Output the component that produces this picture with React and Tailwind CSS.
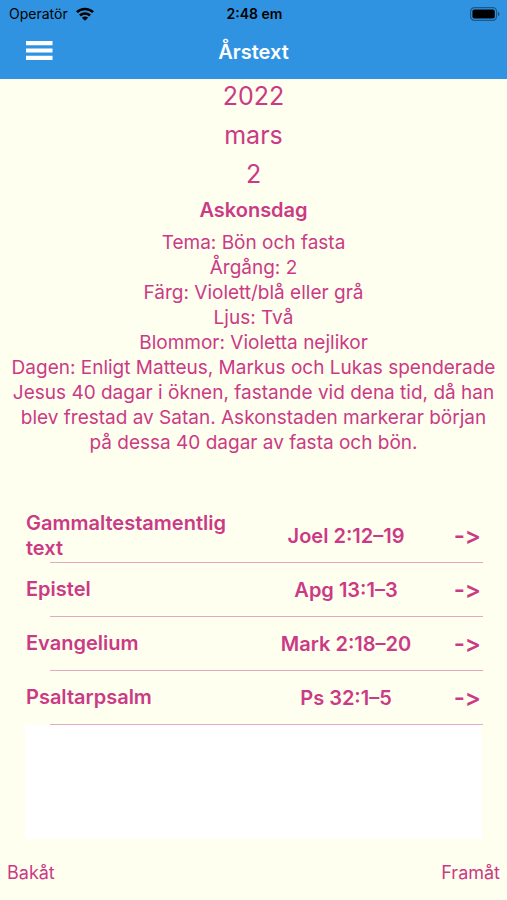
import React from 'react';

const readings = [
  { id: 1, name: 'Gammaltestamentlig text', verse: 'Joel 2:12–19' },
  { id: 2, name: 'Epistel', verse: 'Apg 13:1–3' },
  { id: 3, name: 'Evangelium', verse: 'Mark 2:18–20' },
  { id: 4, name: 'Psaltarpsalm', verse: 'Ps 32:1–5' },
];

const details = [
  'Tema: Bön och fasta',
  'Årgång: 2',
  'Färg: Violett/blå eller grå',
  'Ljus: Två',
  'Blommor: Violetta nejlikor',
  'Dagen: Enligt Matteus, Markus och Lukas spenderade Jesus 40 dagar i öknen, fastande vid dena tid, då han blev frestad av Satan. Askonstaden markerar början på dessa 40 dagar av fasta och bön.',
];

function WifiIcon() {
  return (
    <svg viewBox="0 0 18 14" className="h-[14px] w-[18px]" fill="none" stroke="currentColor" strokeWidth="2.5">
      <path d="M.9 5.2a11.6 11.6 0 0 1 16.2 0" />
      <path d="M3.9 8.5a7.3 7.3 0 0 1 10.2 0" />
      <path d="M9 13.8 5.9 10.7a4.4 4.4 0 0 1 6.2 0z" fill="currentColor" stroke="none" />
    </svg>
  );
}

function BatteryIcon() {
  return (
    <svg viewBox="0 0 30 14" className="h-[14px] w-[30px]">
      <rect x="0.6" y="0.6" width="26" height="12.8" rx="4" fill="none" stroke="currentColor" strokeWidth="1.2" opacity="0.4" />
      <rect x="2.4" y="2.4" width="22.4" height="9.2" rx="2" fill="currentColor" />
      <path d="M28 4.8c2 .8 2 3.6 0 4.4z" fill="currentColor" opacity="0.45" />
    </svg>
  );
}

export default function App() {
  return (
    <div className="flex min-h-screen flex-col bg-[#ffffef] font-['Inter',sans-serif] text-[#cb3a86]">
      {/* Header */}
      <header className="bg-[#3093e1]">
        <div className="grid h-7 grid-cols-3 items-center pr-[7px] pl-[9px] text-sm text-black">
          <div className="flex items-center gap-2">
            <span>Operatör</span>
            <WifiIcon />
          </div>
          <span className="text-center font-semibold">2:48 em</span>
          <div className="flex justify-end">
            <BatteryIcon />
          </div>
        </div>
        <div className="grid h-[51px] grid-cols-3 items-center px-[26px] pb-1 text-white">
          <button type="button" aria-label="Meny" className="w-7">
            <svg viewBox="0 0 28 24" className="h-6 w-7" fill="currentColor">
              <path d="M0 1h26.5v4.2H0zM0 8.4h26.5v4.2H0zM0 15.8h26.5V20H0z" />
            </svg>
          </button>
          <h1 className="text-center text-xl font-semibold">Årstext</h1>
        </div>
      </header>

      {/* Date and day */}
      <main className="text-center text-xl">
        <div className="flex flex-col gap-[5px] text-[25px] leading-[34px]">
          <p>2022</p>
          <p>mars</p>
          <p>2</p>
        </div>
        <h2 className="leading-[38px] font-semibold">Askonsdag</h2>
        <div className="mt-px px-2 text-[19px] leading-[25px]">
          {details.map((line) => (
            <p key={line}>{line}</p>
          ))}
        </div>

        {/* Readings */}
        <ul className="mx-6 mt-[54px] font-semibold">
          {readings.map((reading) => (
            <li key={reading.id}>
              <a href="#" className="flex h-[53px] items-center px-[2px]">
                <span className="w-[225px] text-left leading-[25px]">{reading.name}</span>
                <span className="flex-1">{reading.verse}</span>
                <span className="w-10 text-right text-2xl [font-feature-settings:'calt'_0]">-&gt;</span>
              </a>
              <div className="ml-[26px] h-px bg-[#e5a8c0]" />
            </li>
          ))}
        </ul>
        <div className="mx-[25px] h-[114px] bg-white" />
      </main>

      {/* Navigation */}
      <footer className="mt-auto flex h-[54px] items-center justify-between px-[7px] text-lg">
        <button type="button">Bakåt</button>
        <button type="button">Framåt</button>
      </footer>
    </div>
  );
}
